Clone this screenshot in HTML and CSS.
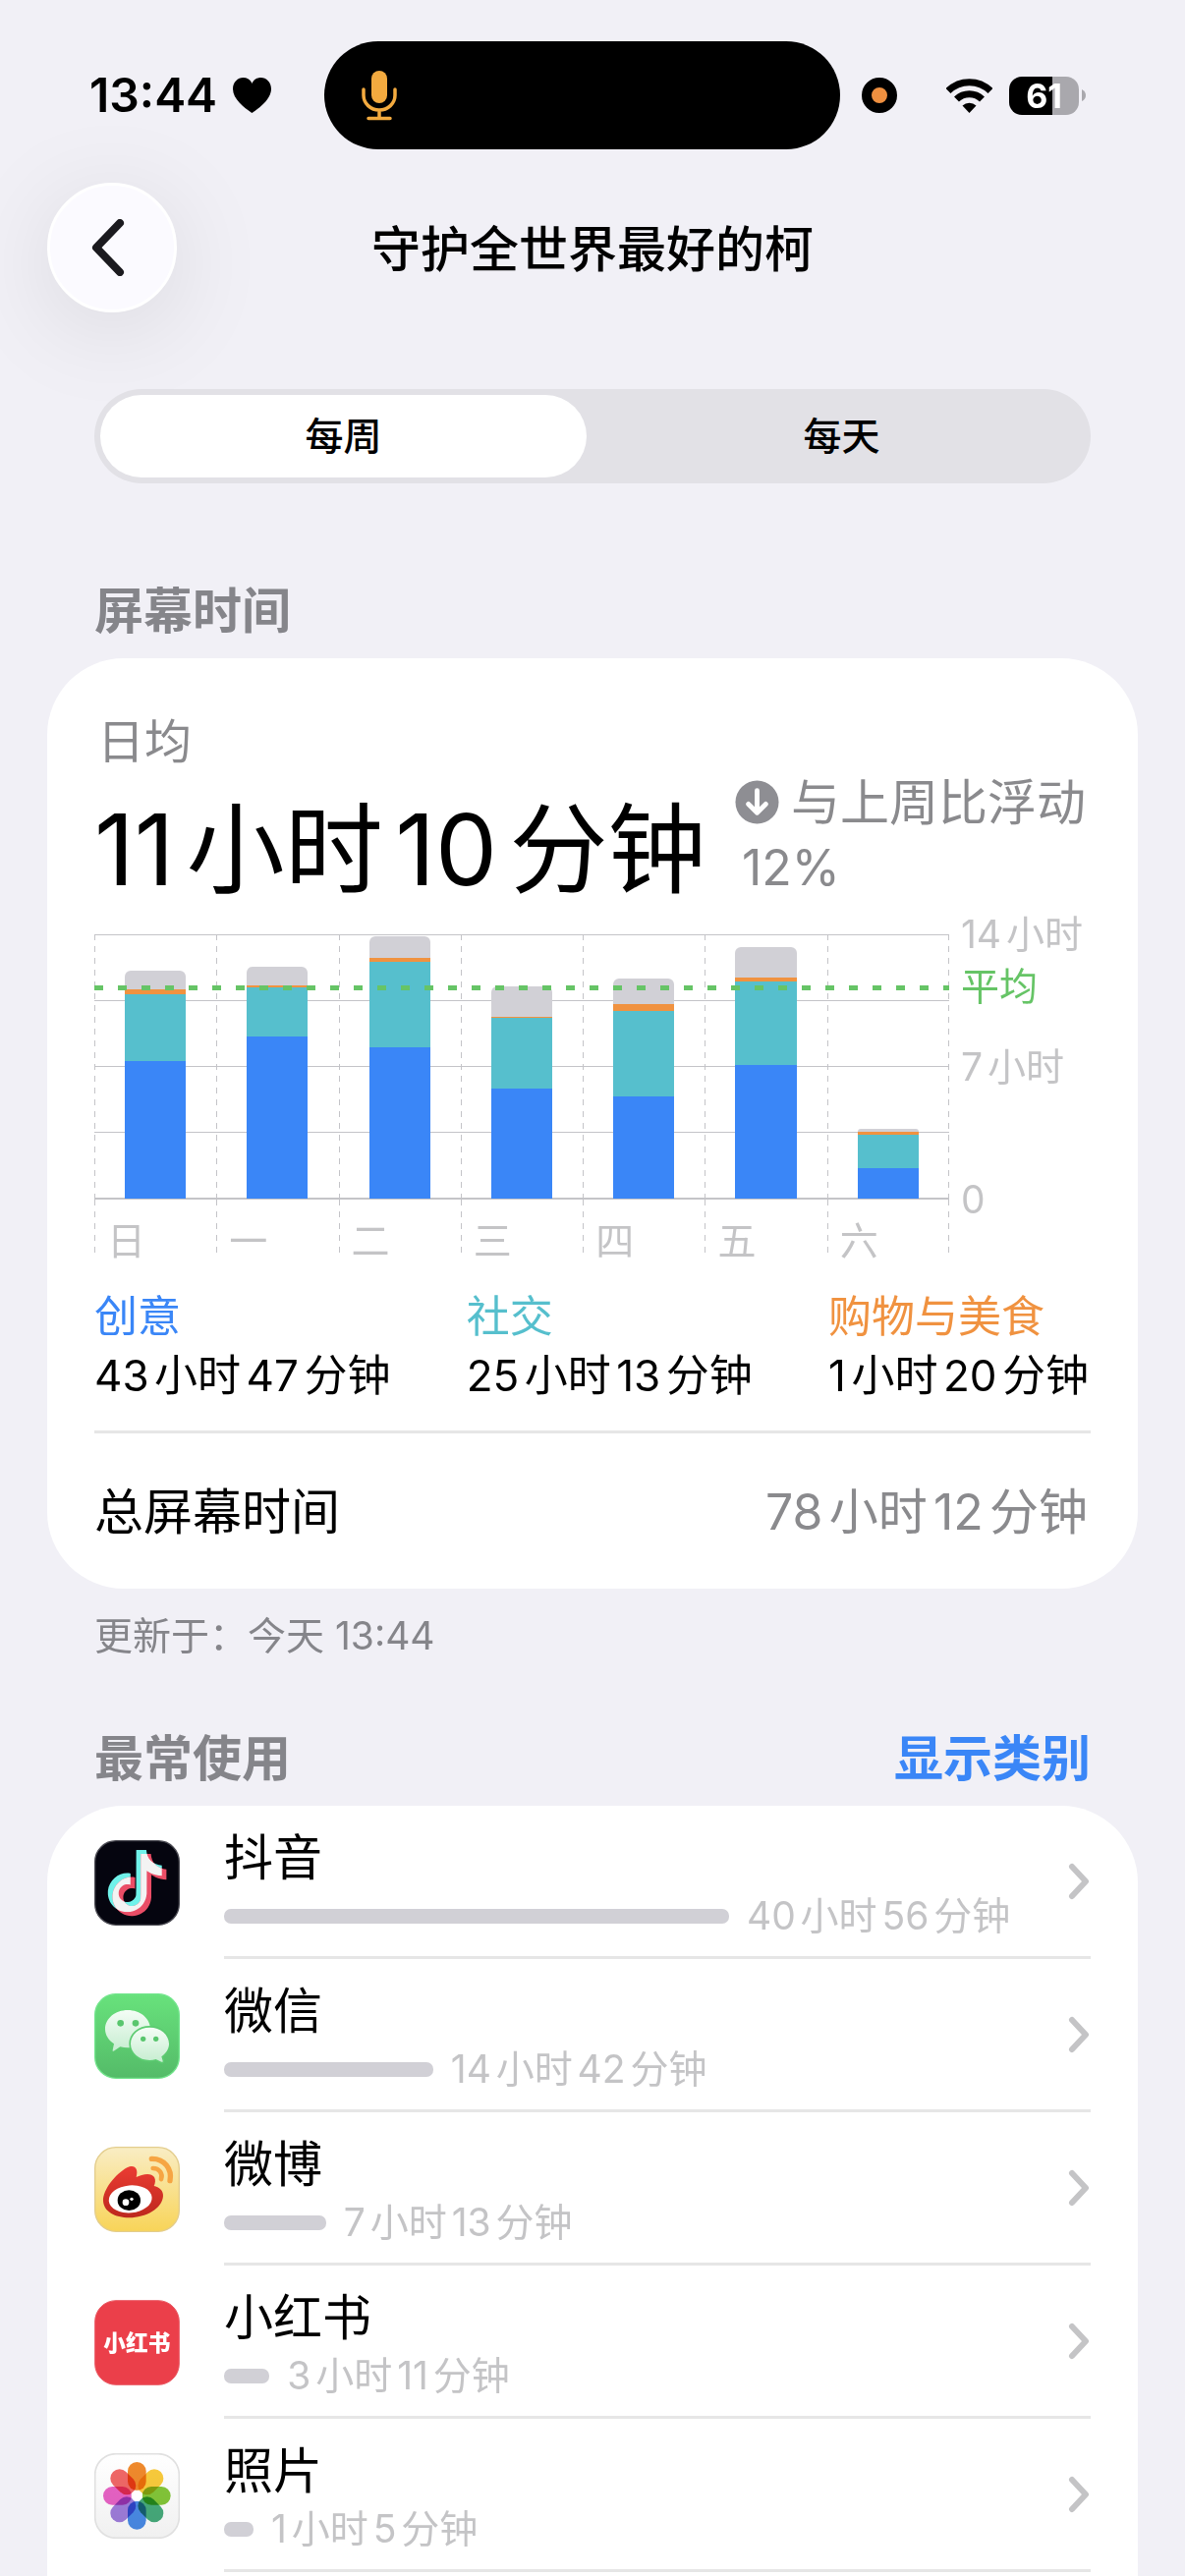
FILE: index.html
```html
<!DOCTYPE html>
<html lang="zh-CN">
<head>
<meta charset="utf-8">
<meta name="viewport" content="width=device-width, initial-scale=1">
<title>屏幕时间</title>
<link rel="stylesheet" href="styles.css">
</head>
<body>
<div class="status">
  <div class="status-left">
    <span class="clock">13:44</span>
    <svg class="heart" viewBox="0 0 39 36" aria-hidden="true"><path d="M19.500 36C12 31 0 22 0 11.500C0 4.500 5 0 10.500 0C14.500 0 18 2 19.500 6C21 2 24.500 0 28.500 0C34 0 39 4.500 39 11.500C39 22 27 31 19.500 36Z"/></svg>
  </div>
  <div class="island">
    <svg class="mic" viewBox="0 0 36 52" aria-hidden="true"><rect x="10" y="1" width="16" height="33" rx="8" fill="#f3aa3f"/><path d="M2 20v6a16 15 0 0 0 32 0v-6M18 41v8M7 49.500h22" fill="none" stroke="#f3aa3f" stroke-width="3.500" stroke-linecap="round"/></svg>
  </div>
  <div class="status-right">
    <span class="rec-dot"></span>
    <svg class="wifi" viewBox="0 0 47 36" aria-hidden="true"><g fill="none" stroke="#000" stroke-width="7"><path d="M2 13.500A30.500 30.500 0 0 1 45 13.500"/><path d="M10.500 22A18.500 18.500 0 0 1 36.500 22"/></g><path d="M23.500 36L16.500 28.500A10.500 10.500 0 0 1 30.500 28.500Z"/></svg>
    <div class="battery"><span class="battery-body">61</span><svg class="nub" viewBox="0 0 4 12" aria-hidden="true"><path d="M0 0Q4 2 4 6T0 12Z" fill="#a9a8ad"/></svg></div>
  </div>
</div>

<header class="nav">
  <button class="back" type="button" aria-label="返回"><svg viewBox="0 0 34 58" aria-hidden="true"><path d="M29 4L5 29L29 54" fill="none" stroke="#1b1a1f" stroke-width="8" stroke-linecap="round" stroke-linejoin="round"/></svg></button>
  <h1>守护全世界最好的柯</h1>
</header>

<main>
  <div class="segmented" role="radiogroup" aria-label="时间范围">
    <label><input type="radio" name="range" checked><span>每周</span></label>
    <label><input type="radio" name="range"><span>每天</span></label>
  </div>

  <div class="section-head section-first"><h2>屏幕时间</h2></div>
  <section class="card">
    <div class="summary">
      <div class="average">
        <p class="average-label">日均</p>
        <p class="average-value">11小时10分钟</p>
      </div>
      <p class="change"><svg viewBox="0 0 46 46" aria-hidden="true"><circle cx="23" cy="23" r="22.500" fill="#8e8e93"/><path d="M23 11V34M14 25L23 34L32 25" fill="none" stroke="#fff" stroke-width="5" stroke-linecap="round" stroke-linejoin="round"/></svg>与上周比浮动12%</p>
    </div>

    <div class="chart">
      <div class="plot">
        <div class="day"><div class="bar"><i class="other" style="height:7%"></i><i class="food" style="height:1.9%"></i><i class="social" style="height:25.5%"></i><i class="create" style="height:51.900%"></i></div></div>
        <div class="day"><div class="bar"><i class="other" style="height:7%"></i><i class="food" style="height:0.8%"></i><i class="social" style="height:18.500%"></i><i class="create" style="height:61.500%"></i></div></div>
        <div class="day"><div class="bar"><i class="other" style="height:8.100%"></i><i class="food" style="height:1.5%"></i><i class="social" style="height:32.200%"></i><i class="create" style="height:57.400%"></i></div></div>
        <div class="day"><div class="bar"><i class="other" style="height:11.500%"></i><i class="food" style="height:0.5%"></i><i class="social" style="height:26.900%"></i><i class="create" style="height:41.500%"></i></div></div>
        <div class="day"><div class="bar"><i class="other" style="height:9.600%"></i><i class="food" style="height:2.600%"></i><i class="social" style="height:32.600%"></i><i class="create" style="height:38.500%"></i></div></div>
        <div class="day"><div class="bar"><i class="other" style="height:11.500%"></i><i class="food" style="height:1.5%"></i><i class="social" style="height:31.900%"></i><i class="create" style="height:50.400%"></i></div></div>
        <div class="day"><div class="bar"><i class="other" style="height:1.200%"></i><i class="food" style="height:1.100%"></i><i class="social" style="height:12.600%"></i><i class="create" style="height:11.500%"></i></div></div>
        <div class="average-line"></div>
      </div>
      <div class="axis">
        <span>14小时</span><span>7小时</span><span>0</span>
        <span class="axis-average">平均</span>
      </div>
      <div class="days"><span>日</span><span>一</span><span>二</span><span>三</span><span>四</span><span>五</span><span>六</span></div>
    </div>

    <dl class="categories">
      <div><dt class="c-create">创意</dt><dd>43小时47分钟</dd></div>
      <div><dt class="c-social">社交</dt><dd>25小时13分钟</dd></div>
      <div><dt class="c-food">购物与美食</dt><dd>1小时20分钟</dd></div>
    </dl>
    <div class="total"><span>总屏幕时间</span><span class="total-value">78小时12分钟</span></div>
  </section>
  <p class="updated">更新于：今天 13:44</p>

  <div class="section-head"><h2>最常使用</h2><button type="button">显示类别</button></div>
  <nav class="card apps">
    <a class="app" href="#douyin">
      <svg class="app-icon" viewBox="48 66 261 261" aria-hidden="true">
        <defs>
          <path id="note" d="M12.525.02c1.31-.02 2.61-.01 3.91-.02.08 1.53.63 3.09 1.75 4.17 1.12 1.11 2.7 1.62 4.24 1.79v4.03c-1.44-.05-2.89-.35-4.2-.97-.57-.26-1.1-.59-1.62-.93-.01 2.92.01 5.84-.02 8.75-.08 1.4-.54 2.79-1.35 3.94-1.31 1.92-3.58 3.17-5.91 3.21-1.43.08-2.86-.31-4.08-1.03-2.02-1.19-3.44-3.37-3.65-5.71-.02-.5-.03-1-.01-1.49.18-1.9 1.12-3.72 2.58-4.96 1.66-1.44 3.98-2.13 6.15-1.72.02 1.48-.04 2.96-.04 4.44-.99-.32-2.15-.23-3.02.37-.63.41-1.11 1.04-1.36 1.75-.21.51-.15 1.07-.14 1.61.24 1.64 1.82 3.02 3.5 2.87 1.12-.01 2.19-.66 2.77-1.61.19-.33.4-.67.41-1.06.1-1.79.06-3.57.07-5.36.01-4.03-.01-8.05.02-12.07z"/>
          <clipPath id="note-clip"><use href="#note" transform="translate(77 96) scale(7.900)"/></clipPath>
        </defs>
        <rect x="50" y="68" width="257" height="257" rx="64" fill="#05050f" stroke="#4a4a52" stroke-width="4"/>
        <use href="#note" transform="translate(77 96) scale(7.900)" fill="#70f2ea"/>
        <use href="#note" transform="translate(91 108) scale(7.900)" fill="#ea4d66"/>
        <g clip-path="url(#note-clip)"><use href="#note" transform="translate(91 108) scale(7.900)" fill="#f3f3f3"/></g>
      </svg>
      <div class="app-body"><div class="app-main"><span class="app-name">抖音</span><span class="usage"><i class="usage-bar" style="width:59.900%"></i>40小时56分钟</span></div>
      <svg class="chevron" viewBox="0 0 24 40" aria-hidden="true"><path d="M5 5L19 20L5 35"/></svg></div>
    </a>
    <a class="app" href="#wechat">
      <svg class="app-icon" viewBox="48 84 261 261" aria-hidden="true">
        <defs>
          <linearGradient id="wx" x2="0" y2="1"><stop offset="0" stop-color="#68e27c"/><stop offset="1" stop-color="#54bb68"/></linearGradient>
          <linearGradient id="bubble" x2="0" y2="1"><stop offset="0" stop-color="#f4fdf6"/><stop offset="1" stop-color="#c6edd0"/></linearGradient>
        </defs>
        <rect x="50" y="86" width="257" height="257" rx="64" fill="url(#wx)" stroke="#72e58c" stroke-width="4"/>
        <path d="M150 135C188 135 219 160 219 193S188 250 150 250Q138 250 127 247L107 260Q103 262 104 257L108 238C91 227 81 211 81 193C81 160 112 135 150 135Z" fill="url(#bubble)"/>
        <path d="M217 188C250 188 276 210 276 238C276 254 267 267 253 277L257 290Q258 295 253 293L236 285Q226 288 217 288C184 288 159 266 159 238S184 188 217 188Z" fill="#5ccb71" stroke="#5ccb71" stroke-width="10"/>
        <path d="M217 188C250 188 276 210 276 238C276 254 267 267 253 277L257 290Q258 295 253 293L236 285Q226 288 217 288C184 288 159 266 159 238S184 188 217 188Z" fill="url(#bubble)"/>
        <g fill="#59c66e"><circle cx="128" cy="175" r="10"/><circle cx="174" cy="175" r="10"/><circle cx="197" cy="223" r="8"/><circle cx="236" cy="223" r="8"/></g>
      </svg>
      <div class="app-body"><div class="app-main"><span class="app-name">微信</span><span class="usage"><i class="usage-bar" style="width:24.800%"></i>14小时42分钟</span></div>
      <svg class="chevron" viewBox="0 0 24 40" aria-hidden="true"><path d="M5 5L19 20L5 35"/></svg></div>
    </a>
    <a class="app" href="#weibo">
      <svg class="app-icon" viewBox="48 552 261 261" aria-hidden="true">
        <defs>
          <linearGradient id="wb" x2="0" y2="1"><stop offset="0" stop-color="#f9edc4"/><stop offset="1" stop-color="#f8d458"/></linearGradient>
          <linearGradient id="flame" x2="0" y2="1"><stop offset="0" stop-color="#eb3c33"/><stop offset="1" stop-color="#bd281d"/></linearGradient>
        </defs>
        <rect x="50" y="554" width="257" height="257" rx="64" fill="url(#wb)" stroke="#e3cd8d" stroke-width="4"/>
        <path d="M75 718C74 684 112 636 148 616C170 605 184 618 176 645C192 637 221 629 231 645C236 654 234 664 230 672C246 675 259 686 258 703C256 741 205 769 155 769C110 769 77 750 75 718Z" fill="url(#flame)"/>
        <ellipse cx="158" cy="712" rx="66" ry="42" transform="rotate(-5 158 712)" fill="#fff"/>
        <ellipse cx="154" cy="716" rx="35" ry="31" fill="#000"/>
        <circle cx="144" cy="722" r="10" fill="#fff"/><circle cx="162" cy="712" r="5" fill="#fff"/>
        <g fill="none" stroke="#f6a543" stroke-linecap="round"><path d="M223 589C262 588 286 620 279 656" stroke-width="16"/><path d="M227 618C246 618 258 634 252 651" stroke-width="14"/></g>
      </svg>
      <div class="app-body"><div class="app-main"><span class="app-name">微博</span><span class="usage"><i class="usage-bar" style="width:12.100%"></i>7小时13分钟</span></div>
      <svg class="chevron" viewBox="0 0 24 40" aria-hidden="true"><path d="M5 5L19 20L5 35"/></svg></div>
    </a>
    <a class="app" href="#xiaohongshu">
      <svg class="app-icon" viewBox="0 0 261 261" aria-hidden="true">
        <rect x="2" y="2" width="257" height="257" rx="64" fill="#eb3f4a" stroke="#ea5a64" stroke-width="3"/>
        <text class="logo-text" x="130" y="155" text-anchor="middle">小红书</text>
      </svg>
      <div class="app-body"><div class="app-main"><span class="app-name">小红书</span><span class="usage"><i class="usage-bar" style="width:5.400%"></i>3小时11分钟</span></div>
      <svg class="chevron" viewBox="0 0 24 40" aria-hidden="true"><path d="M5 5L19 20L5 35"/></svg></div>
    </a>
    <a class="app" href="#photos">
      <svg class="app-icon" viewBox="48 558 261 261" aria-hidden="true">
        <defs><linearGradient id="ph" x2="0" y2="1"><stop offset="0" stop-color="#ffffff"/><stop offset="1" stop-color="#f0f0f0"/></linearGradient></defs>
        <rect x="50" y="560" width="257" height="257" rx="64" fill="url(#ph)" stroke="#e0e0e0" stroke-width="5"/>
        <g class="petals">
          <rect x="150" y="585" width="56" height="87" rx="28" fill="#f08a2c"/>
          <rect x="150" y="585" width="56" height="87" rx="28" fill="#f9cb3c" transform="rotate(45 178 688)"/>
          <rect x="150" y="585" width="56" height="87" rx="28" fill="#84c739" transform="rotate(90 178 688)"/>
          <rect x="150" y="585" width="56" height="87" rx="28" fill="#47ac7c" transform="rotate(135 178 688)"/>
          <rect x="150" y="585" width="56" height="87" rx="28" fill="#4a8ce8" transform="rotate(180 178 688)"/>
          <rect x="150" y="585" width="56" height="87" rx="28" fill="#a07edd" transform="rotate(225 178 688)"/>
          <rect x="150" y="585" width="56" height="87" rx="28" fill="#e963c6" transform="rotate(270 178 688)"/>
          <rect x="150" y="585" width="56" height="87" rx="28" fill="#f16867" transform="rotate(315 178 688)"/>
        </g>
        <circle cx="178" cy="688" r="17" fill="#fff"/>
      </svg>
      <div class="app-body"><div class="app-main"><span class="app-name">照片</span><span class="usage"><i class="usage-bar" style="width:3.5%"></i>1小时5分钟</span></div>
      <svg class="chevron" viewBox="0 0 24 40" aria-hidden="true"><path d="M5 5L19 20L5 35"/></svg></div>
    </a>
  </nav>
</main>
</body>
</html>
```

FILE: styles.css
```css
* { box-sizing: border-box; }

body {
  margin: 0;
  min-height: 100vh;
  display: flex;
  flex-direction: column;
  background: #f1f0f6;
  color: #000;
  font-family: Inter, "Noto Sans CJK SC", sans-serif;
  font-size: 50px;
  line-height: 60px;
  text-autospace: normal;
}

h1, h2, p, dl, dd { margin: 0; font-size: inherit; }
button { border: 0; padding: 0; background: none; font: inherit; }
svg { display: block; flex: none; }

/* Status bar */
.status {
  display: grid;
  grid-template-columns: 330fr 525fr 351fr;
  align-items: center;
  padding-top: 42px;
}
.status-left { display: flex; align-items: center; gap: 16px; padding-left: 91px; }
.clock { font-size: 48px; font-weight: 600; }
.heart { width: 39px; height: 36px; }
.island {
  display: flex;
  align-items: center;
  height: 110px;
  padding-left: 38px;
  border-radius: 55px;
  background: #000;
}
.mic { width: 36px; height: 52px; }
.status-right { display: flex; align-items: center; padding-left: 22px; }
.rec-dot {
  width: 36px;
  height: 36px;
  margin-right: 50px;
  border: 10px solid #000;
  border-radius: 50%;
  background: #ef9040;
}
.wifi { width: 47px; height: 36px; margin-right: 17px; }
.battery { display: flex; align-items: center; gap: 3px; }
.battery-body {
  width: 71px;
  height: 39px;
  border-radius: 13px;
  background: linear-gradient(90deg, #000 62%, #a9a8ad 62%);
  color: #fff;
  font-size: 34px;
  font-weight: 700;
  line-height: 39px;
  text-align: center;
}
.nub { width: 4px; height: 12px; }

/* Navigation bar */
.nav {
  display: grid;
  grid-template-columns: 132px 1fr 132px;
  align-items: center;
  padding: 34px 48px 0;
}
.back {
  display: grid;
  place-items: center;
  width: 132px;
  height: 132px;
  padding-right: 8px;
  border: 3px solid #fff;
  border-radius: 50%;
  background: #fbfaff;
  box-shadow: 0 16px 100px rgba(0, 0, 0, 0.1);
}
.back svg { width: 34px; height: 58px; }
h1 { padding-top: 3px; font-size: 50px; font-weight: 500; text-align: center; }

main {
  flex: 1;
  display: flex;
  flex-direction: column;
  padding: 78px 48px 0;
}

/* Week / day switch */
.segmented {
  position: relative;
  display: grid;
  grid-template-columns: 1fr 1fr;
  gap: 12px;
  margin: 0 48px;
  padding: 6px;
  border-radius: 48px;
  background: #e2e1e6;
  font-size: 39px;
  font-weight: 500;
}
.segmented label { display: block; text-align: center; }
.segmented input { position: absolute; opacity: 0; }
.segmented span { display: block; border-radius: 42px; line-height: 84px; }
.segmented input:checked + span { background: #fff; }

.section-head {
  display: flex;
  justify-content: space-between;
  margin: 71px 48px 18px;
  color: #85858a;
}
.section-first { margin-top: 100px; }
.section-head h2, .section-head button { font-weight: 600; }
.section-head button { color: #3a86f7; }

.card { padding: 55px 48px 0; border-radius: 78px; background: #fff; }

/* Daily average */
.summary { display: flex; justify-content: space-between; align-items: flex-end; }
.average-label { margin-bottom: 29px; padding-left: 3px; color: #8a8a8d; font-size: 48px; }
.average-value { font-size: 100px; line-height: 102px; white-space: nowrap; }
.change {
  width: 362px;
  padding-left: 7px;
  color: #8a8a8d;
  line-height: 66px;
  text-indent: -7px;
}
.change svg { display: inline-block; width: 45px; height: 45px; margin-right: 12px; vertical-align: -4px; }

/* Weekly chart */
.chart {
  display: grid;
  grid-template-columns: 870fr 144fr;
  grid-template-rows: 270px 60px;
  margin-top: 35px;
  color: #c4c4c6;
  font-size: 39px;
}
.plot {
  position: relative;
  display: grid;
  grid-template-columns: repeat(7, 1fr);
  border-bottom: 1px solid #c4c4c8;
  background: repeating-linear-gradient(#c4c4c8 0 1px, transparent 1px 67px);
}
.day, .days span {
  background: repeating-linear-gradient(#c4c4c8 0 6px, transparent 6px 12px) left / 1px 100% no-repeat;
}
.day:nth-child(7), .days span:last-child {
  background:
    repeating-linear-gradient(#c4c4c8 0 6px, transparent 6px 12px) left / 1px 100% no-repeat,
    repeating-linear-gradient(#c4c4c8 0 6px, transparent 6px 12px) right / 1px 100% no-repeat;
}
.bar {
  display: flex;
  flex-direction: column;
  justify-content: flex-end;
  width: 50%;
  height: 100%;
  margin: 0 auto;
}
.bar i { display: block; flex: none; }
.create { background: #3a86f7; }
.social { background: #56bfcd; }
.food { background: #f09240; }
.other { border-radius: 6px 6px 0 0; background: #d1d0d6; }
.average-line {
  position: absolute;
  right: 0;
  bottom: 79%;
  left: 0;
  height: 5px;
  background: repeating-linear-gradient(90deg, #66c466 0 9px, transparent 9px 24px);
}
.axis {
  position: relative;
  display: flex;
  flex-direction: column;
  justify-content: space-between;
  margin: -20px 0;
  padding-left: 12px;
  line-height: 40px;
  white-space: nowrap;
}
.axis-average { position: absolute; bottom: 70%; color: #66c466; }
.days { display: grid; grid-template-columns: repeat(7, 1fr); }
.days span { padding: 24px 0 0 13px; line-height: 36px; }

/* Category totals */
.categories {
  display: flex;
  justify-content: space-between;
  margin-top: 29px;
  padding: 0 2px 26px 0;
  font-size: 44px;
  white-space: nowrap;
}
.c-create { color: #3a86f7; }
.c-social { color: #56bfcd; }
.c-food { color: #f09240; }
.total {
  display: flex;
  justify-content: space-between;
  padding: 50px 3px 48px 0;
  border-top: 3px solid #e6e6e6;
}
.total-value { color: #8a8a8d; }

.updated {
  margin: 24px 48px 0;
  color: #85858a;
  font-size: 39px;
  line-height: 48px;
}

/* App list */
.apps { flex: 1; padding-top: 0; border-radius: 78px 78px 0 0; }
.app {
  display: flex;
  align-items: center;
  gap: 45px;
  color: inherit;
  text-decoration: none;
}
.app-icon { width: 87px; height: 87px; }
.app-body {
  flex: 1;
  display: flex;
  align-items: center;
  border-bottom: 3px solid #e6e6e6;
}
.app-main {
  flex: 1;
  display: flex;
  flex-direction: column;
  gap: 5px;
  padding: 23px 0 17px;
}
.usage {
  display: flex;
  align-items: center;
  gap: 18px;
  color: #c4c4c6;
  font-size: 39px;
  line-height: 48px;
  white-space: nowrap;
}
.usage-bar { flex: none; height: 15px; border-radius: 7px; background: #d1d0d6; }
.chevron { width: 24px; height: 40px; }
.chevron path {
  fill: none;
  stroke: #c4c4c6;
  stroke-width: 6px;
  stroke-linecap: round;
  stroke-linejoin: round;
}
.logo-text { fill: #fff; font-family: "Noto Sans CJK SC", sans-serif; font-size: 68px; font-weight: 900; }
.petals rect { mix-blend-mode: multiply; }
```
